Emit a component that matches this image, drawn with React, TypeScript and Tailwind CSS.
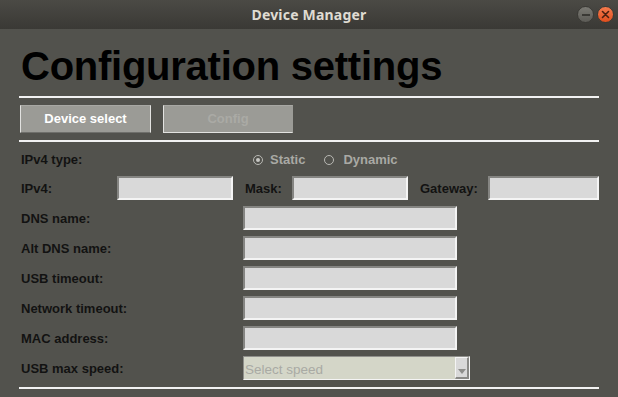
import React from "react";

const font = { fontFamily: '"Liberation Sans", Arial, sans-serif' };

function Input({ w }: { w: string }) {
  return (
    <div
      className={`${w} h-[24px] bg-[#d9d9d9] border-t-[2px] border-l-[2px] border-b-[2px] border-r-[2px] border-t-[#858582] border-l-[#858582] border-b-[#f4f4f4] border-r-[#f4f4f4] box-border`}
    />
  );
}

function Label({ children, w }: { children: React.ReactNode; w: string }) {
  return (
    <div className={`${w} h-[24px] pt-[1px] text-[13px] font-bold text-[#121212] leading-[24px] whitespace-nowrap`}>{children}</div>
  );
}

export default function App() {
  const rows = ["DNS name:", "Alt DNS name:", "USB timeout:", "Network timeout:", "MAC address:"];
  return (
    <div className="w-[618px] h-[397px] bg-[#52524d] overflow-hidden flex flex-col" style={font}>
      {/* Title bar */}
      <div className="relative h-[29px] shrink-0 bg-gradient-to-b from-[#4b4a45] to-[#3a3935] flex items-center justify-center">
        <span
          className="text-[14px] font-bold text-[#dfdbd2] tracking-[0.2px]"
          style={{ fontFamily: '"Noto Sans", "DejaVu Sans", sans-serif' }}
        >
          Device Manager
        </span>
        <div className="absolute right-[4px] top-[6px] flex gap-[3px]">
          <div className="w-[17px] h-[17px] rounded-full bg-gradient-to-b from-[#7a7973] to-[#5c5b56] border border-[#3a3935] flex items-center justify-center">
            <div className="w-[8px] h-[2px] bg-[#3a3935]" />
          </div>
          <div className="w-[17px] h-[17px] rounded-full bg-gradient-to-b from-[#f47a4c] to-[#e04e1c] border border-[#3a3935] flex items-center justify-center">
            <svg width="9" height="9" viewBox="0 0 9 9">
              <path d="M1.5 1.5 L7.5 7.5 M7.5 1.5 L1.5 7.5" stroke="#4a2010" strokeWidth="1.6" strokeLinecap="round" />
            </svg>
          </div>
        </div>
      </div>

      {/* Body */}
      <div className="flex flex-col px-[19px]">
        <div className="mt-[17px] h-[40px] text-[40px] leading-[40px] font-bold text-black whitespace-nowrap pl-[2px] tracking-[-0.25px]">
          Configuration settings
        </div>
        <div className="mt-[10px] w-[580px] h-[2px] bg-[#f2f2f2]" />

        {/* Buttons */}
        <div className="mt-[7px] flex pl-[1px] gap-[12px]">
          <div className="w-[131px] h-[28px] bg-[#9b9b96] border border-t-[#a8a8a4] border-l-[#e2e2e0] border-r-[#e2e2e0] border-b-[#6f6f6b] box-border flex items-center justify-center text-[13px] font-bold text-white">
            Device select
          </div>
          <div className="w-[130px] h-[28px] bg-[#9b9b96] border border-t-[#a8a8a4] border-l-[#e2e2e0] border-r-[#9b9b96] border-b-[#e2e2e0] box-border flex items-center justify-center text-[13px] font-bold text-[#aaaaa5]">
            Config
          </div>
        </div>
        <div className="mt-[7px] w-[580px] h-[2px] bg-[#f2f2f2]" />

        {/* IPv4 type */}
        <div className="mt-[5px] h-[24px] flex items-center pl-[2px]">
          <Label w="w-[232px]">IPv4 type:</Label>
          <div className="flex items-center text-[13px] font-bold text-[#a9a9a4] pt-[1px]">
            <span className="w-[10px] h-[10px] rounded-full border border-[#b8b8b3] flex items-center justify-center box-border">
              <span className="w-[4px] h-[4px] rounded-full bg-[#c8c8c3]" />
            </span>
            <span className="ml-[7px]">Static</span>
            <span className="ml-[19px] w-[10px] h-[10px] rounded-full border border-[#b8b8b3] box-border" />
            <span className="ml-[9px]">Dynamic</span>
          </div>
        </div>

        {/* IPv4 row */}
        <div className="mt-[5px] h-[24px] flex items-center pl-[2px]">
          <Label w="w-[96px]">IPv4:</Label>
          <Input w="w-[116px]" />
          <div className="ml-[12px]">
            <Label w="w-[47px]">Mask:</Label>
          </div>
          <Input w="w-[116px]" />
          <div className="ml-[12px]">
            <Label w="w-[68px]">Gateway:</Label>
          </div>
          <Input w="w-[111px]" />
        </div>

        {/* Text rows */}
        <div className="mt-[6px] flex flex-col gap-[6px]">
          {rows.map((r) => (
            <div key={r} className="h-[24px] flex items-center pl-[2px]">
              <Label w="w-[222px]">{r}</Label>
              <Input w="w-[214px]" />
            </div>
          ))}
          <div className="h-[24px] flex items-center pl-[2px]">
            <Label w="w-[222px]">USB max speed:</Label>
            <div className="w-[227px] h-[24px] flex border border-t-[#8f8f8b] border-l-[#8f8f8b] border-b-[#f4f4f4] border-r-[#f4f4f4] box-border bg-[#d4d6c8]">
              <div className="flex-1 text-[13.5px] leading-[22px] pt-[2px] text-[#a9aaa4] pl-[1px]">Select speed</div>
              <div className="w-[14px] h-full bg-[#d9d9d9] border-l border-t border-l-[#f4f4f4] border-t-[#f4f4f4] border-r-[2px] border-r-[#8a8a87] border-b-[2px] border-b-[#8a8a87] box-border flex items-end justify-center pb-[3px]">
                <svg width="8" height="5" viewBox="0 0 8 5">
                  <path d="M0 0 H8 L4 5 Z" fill="#8e8e8b" />
                </svg>
              </div>
            </div>
          </div>
        </div>
        <div className="mt-[7px] w-[580px] h-[2px] bg-[#f2f2f2]" />
      </div>
    </div>
  );
}
